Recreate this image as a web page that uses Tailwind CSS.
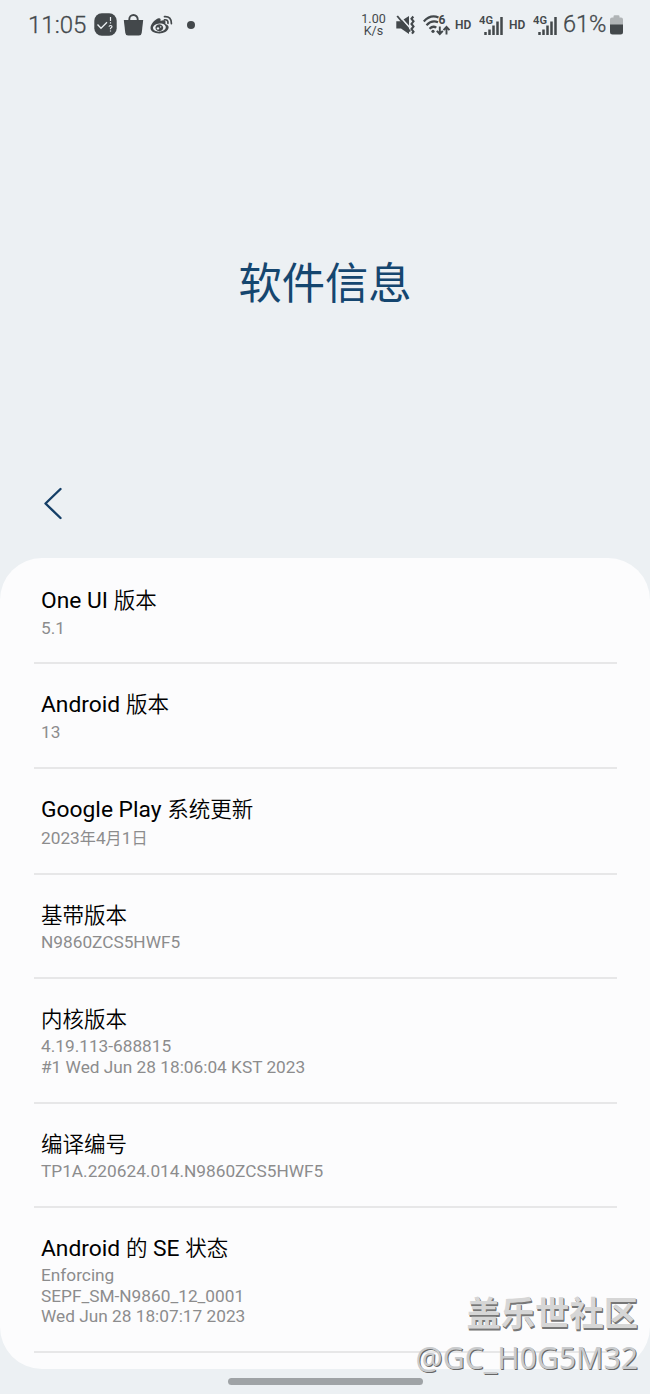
<!DOCTYPE html>
<html lang="zh-CN">
<head>
<meta charset="utf-8">
<title>软件信息</title>
<script src="https://cdn.jsdelivr.net/npm/@tailwindcss/browser@4"></script>
</head>
<body class="bg-[#ecf0f3]">
<div class="relative flex flex-col w-[650px] h-[1394px] overflow-hidden bg-[#ecf0f3] font-['Roboto','Noto_Sans_CJK_SC',sans-serif]">
  <header class="flex items-center justify-between h-12 pt-px pl-7 pr-[27px] text-[#43484b] shrink-0">
    <div class="flex items-center">
      <span class="w-[66px] text-[24px] leading-none whitespace-nowrap font-light [-webkit-text-stroke:0.3px_#43484b]">11:05</span>
      <svg class="w-[23px] h-[23px]" viewBox="0 0 23 23"><rect x=".3" y=".3" width="22.4" height="22.4" rx="7.5" fill="#43484b"/><path d="M3.5 11.5l3.5 3.8 6-6" fill="none" stroke="#ecf0f3" stroke-width="1.3"/><path d="M16.5 4v4M16.5 9.3v1.3M15 13.6q.2-1.1 1.5-1.1 1.5 0 1.5 1.2 0 .8-1.5 1.5v1M16.5 17.4v1.2" fill="none" stroke="#ecf0f3" stroke-width="1.2"/></svg>
      <svg class="ml-[6px] w-[21px] h-[22px]" viewBox="0 0 21 22"><path d="M.8 6h19.400l-1.500 13q-.3 2.500-2.800 2.500H5.100q-2.500 0-2.800-2.500z" fill="#43484b"/><path d="M6.300 8V5.200a4.200 4.200 0 0 1 8.400 0V8" fill="none" stroke="#43484b" stroke-width="1.900"/></svg>
      <svg class="ml-[6px] w-[24px] h-[22px]" viewBox="0 0 24 22"><path fill="#43484b" fill-rule="evenodd" d="M8.500 4.300c1.700-.5 2.600.6 2 2.700 2.600-1.100 5.400-1 5 1.500-.1.900-.2 1.400.5 1.700 2.300.8 3 2.200 2.500 4-.8 3-4.700 5.200-9.200 5.200C4.500 19.400.5 17.300.5 14c0-3.800 4.500-8.600 8-9.700zM9.600 9.400c-3.900.2-6.700 2.200-6.600 4.600.1 2.300 3 3.900 6.600 3.600 3.500-.2 6.300-2.300 6.200-4.600s-2.800-3.800-6.200-3.600z"/><path fill="#43484b" fill-rule="evenodd" d="M9.300 10.300a3.900 3.500 0 1 0 .01 0zM8 13.200a1.300 1.200 0 1 1-.01 0zM10.700 12.300a.7.6 0 1 1-.01 0z"/><path d="M14.500 5.800q3.700-.4 3.500 3.500M14.500 2.600q7-.5 6.900 7" fill="none" stroke="#43484b" stroke-width="1.700" stroke-linecap="round"/></svg>
      <i class="ml-[13px] w-[8px] h-[8px] rounded-full bg-[#43484b]"></i>
    </div>
    <div class="flex items-center">
      <div class="w-[25px] text-center text-[12.500px] leading-[12px] whitespace-nowrap"><div>1.00</div><div>K/s</div></div>
      <svg class="ml-[10px] w-[20px] h-[20px]" viewBox="0 0 20 20"><path d="M.3 6.300h4.400L13 1v18l-8-5.500H.3z" fill="#43484b"/><path d="M3 .5l12 13.500" stroke="#ecf0f3" stroke-width="1.600"/><path d="M1.200 1l13 15.500" stroke="#43484b" stroke-width="1.900"/><path d="M17.300 1.500l-1.800 2.300 2 2.500-2 2.600 2 2.600-2 2.600 2 2.600-1.500 2" fill="none" stroke="#43484b" stroke-width="2.100"/></svg>
      <svg class="ml-[7px] w-[28px] h-[22px] overflow-visible" viewBox="0 0 28 22"><g fill="none" stroke="#43484b" stroke-width="2.200"><path d="M.8 7.500Q7.500.2 15.500 3.500M3.500 11.200Q9 5.500 15 8.300M6.500 14.700q3.500-3.300 6.800-1"/><path d="M16.800 12.500v7.500M13.800 16.800l3 3.200 3-3.200M23.500 20.500v-7.500M20.500 16.200l3-3.200 3 3.200" stroke-width="1.900"/></g><circle cx="10" cy="17.300" r="1.600" fill="#43484b"/><text x="15.500" y="10" font-size="12" font-weight="700" fill="#43484b">6</text></svg>
      <span class="ml-[4px] w-[17px] text-[12px] font-semibold leading-none">HD</span>
      <svg class="ml-[7px] w-[25px] h-[22px]" viewBox="0 0 25 22"><text x="0" y="10" font-size="11.500" font-weight="600" textLength="14" lengthAdjust="spacingAndGlyphs" fill="#43484b">4G</text><path d="M6.500 18v3M10.500 15.500V21M14.500 11.500V21M18.500 7.500V21M22.500 3v18" stroke="#43484b" stroke-width="2.500"/></svg>
      <span class="ml-[5px] w-[17px] text-[12px] font-semibold leading-none">HD</span>
      <svg class="ml-[7px] w-[25px] h-[22px]" viewBox="0 0 25 22"><text x="0" y="10" font-size="11.500" font-weight="600" textLength="14" lengthAdjust="spacingAndGlyphs" fill="#43484b">4G</text><path d="M6.500 18v3M10.500 15.500V21M14.500 11.500V21M18.500 7.500V21M22.500 3v18" stroke="#43484b" stroke-width="2.500"/></svg>
      <span class="ml-[5px] w-[44px] text-[23.5px] leading-none whitespace-nowrap font-light [-webkit-text-stroke:0.3px_#43484b] pt-px">61%</span>
      <svg class="ml-[3px] w-[13px] h-[20px]" viewBox="0 0 13 20"><path d="M0 4.500Q0 2.500 2 2.500h1.500V1.500Q3.500.3 4.700.3h3.600q1.200 0 1.200 1.200v1H11q2 0 2 2V10H0z" fill="#b0b4b6"/><path d="M0 9.500h13V17q0 2.500-2.500 2.500h-8Q0 19.500 0 17z" fill="#43484b"/></svg>
    </div>
  </header>
  <div class="flex items-center justify-center h-[468px] pt-[5px] shrink-0"><h1 class="text-[43.300px] leading-none text-[#15466f]">软件信息</h1></div>
  <nav class="-mt-[32px] h-[74px] pl-[43px] pt-[3px] shrink-0"><svg class="w-5 h-[33px]" viewBox="0 0 20 33"><path d="M17.500 2L2.500 16.500l15 14.500" fill="none" stroke="#153f67" stroke-width="2.400" stroke-linecap="round" stroke-linejoin="round"/></svg></nav>
  <main class="flex flex-col h-[811px] shrink-0 rounded-[42px] bg-[#fcfcfd] pl-[34px] pr-[33px] text-[17.250px] leading-[20.500px] text-[#8c8c8d] overflow-hidden">
    <section class="h-[106px] shrink-0 border-b-2 border-[#e7e7e8] pl-[7px] pt-[29px]"><h2 class="text-[22.800px] leading-[28px] mb-[3px] text-black">One UI <span class="text-[21.500px] font-[350]">版本</span></h2><p>5.1</p></section>
    <section class="h-[105px] shrink-0 border-b-2 border-[#e7e7e8] pl-[7px] pt-[27px]"><h2 class="text-[22.800px] leading-[28px] mb-[3px] text-black">Android <span class="text-[21.500px] font-[350]">版本</span></h2><p>13</p></section>
    <section class="h-[106px] shrink-0 border-b-2 border-[#e7e7e8] pl-[7px] pt-[27px]"><h2 class="text-[22.800px] leading-[28px] mb-[4px] text-black">Google Play <span class="text-[21.500px] font-[350]">系统更新</span></h2><p>2023<span class="text-[16.100px]">年</span>4<span class="text-[16.100px]">月</span>1<span class="text-[16.100px]">日</span></p></section>
    <section class="h-[104px] shrink-0 border-b-2 border-[#e7e7e8] pl-[7px] pt-[27px]"><h2 class="text-[21.500px] leading-[28px] mb-[2px] text-black font-[350]">基带版本</h2><p>N9860ZCS5HWF5</p></section>
    <section class="h-[125px] shrink-0 border-b-2 border-[#e7e7e8] pl-[7px] pt-[27px]"><h2 class="text-[21.500px] leading-[28px] mb-[2px] text-black font-[350]">内核版本</h2><p>4.19.113-688815<br>#1 Wed Jun 28 18:06:04 KST 2023</p></section>
    <section class="h-[104px] shrink-0 border-b-2 border-[#e7e7e8] pl-[7px] pt-[27px]"><h2 class="text-[21.500px] leading-[28px] mb-[2px] text-black font-[350]">编译编号</h2><p>TP1A.220624.014.N9860ZCS5HWF5</p></section>
    <section class="h-[145px] shrink-0 border-b-2 border-[#e7e7e8] pl-[7px] pt-[27px]"><h2 class="text-[22.800px] leading-[28px] mb-[2px] text-black">Android <span class="text-[21.500px] font-[350]">的</span> SE <span class="text-[21.500px] font-[350]">状态</span></h2><p>Enforcing<br>SEPF_SM-N9860_12_0001<br>Wed Jun 28 18:07:17 2023</p></section>
  </main>
  <div class="mt-[9px] mx-auto w-[195px] h-[7px] rounded-full bg-[#9fa3a6] shrink-0"></div>
  <div class="absolute right-[12px] top-[1290px] flex flex-col items-end whitespace-nowrap text-[#d6d6d6] font-['Noto_Sans','Noto_Sans_CJK_SC',sans-serif]">
    <div class="text-[34.300px] leading-[46px] font-bold [text-shadow:1px_1px_0_#777,1px_2px_0_#777]">盖乐世社区</div>
    <div class="text-[30.200px] leading-[44px] text-[#c9cbcd] [text-shadow:1px_1px_0_#666]">@GC_H0G5M32</div>
  </div>
</div>
</body>
</html>
